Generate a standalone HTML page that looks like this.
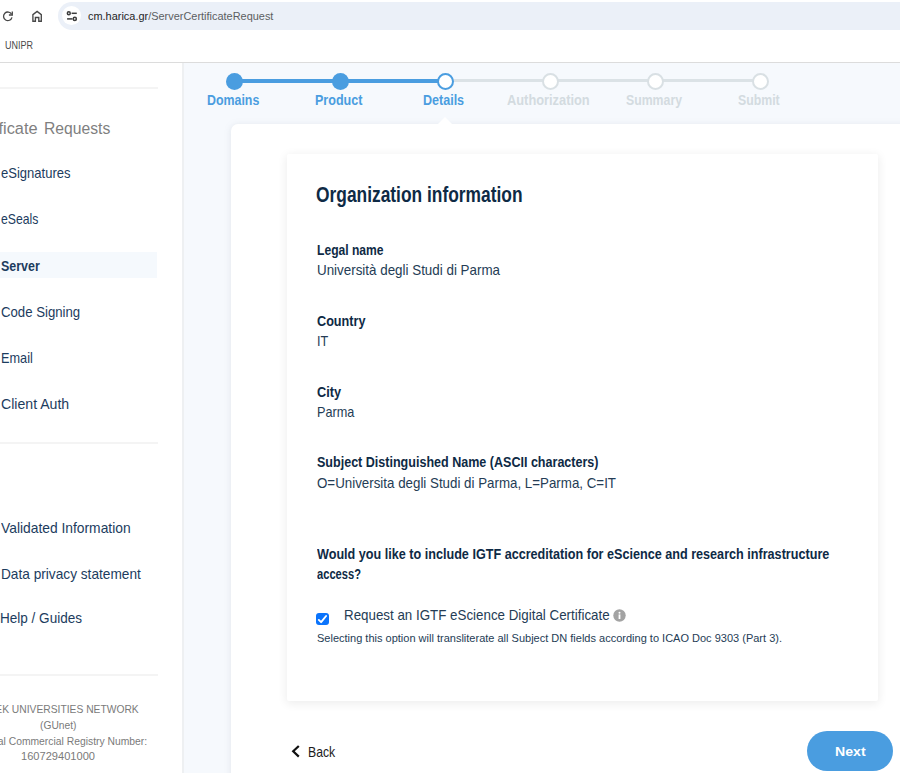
<!DOCTYPE html>
<html><head><meta charset="utf-8">
<style>
html,body{margin:0;padding:0;width:900px;height:773px;overflow:hidden;background:#fff;}
body{position:relative;font-family:"Liberation Sans",sans-serif;}
.t{position:absolute;white-space:nowrap;transform-origin:0 0;font-family:"Liberation Sans",sans-serif;}
.abs{position:absolute;}
#addr{left:58px;top:2px;width:880px;height:28px;border-radius:14px;background:#ebf0f8;}
#infoc{left:62.4px;top:6.4px;width:19px;height:19px;border-radius:50%;background:#fff;}
#topline{left:0;top:62px;width:900px;height:1px;background:#dcdcdc;}
#side{left:0;top:63px;width:182px;height:710px;background:#fff;}
#sideborder{left:182px;top:63px;width:2px;height:710px;background:#eef0f2;}
#main{left:184px;top:63px;width:716px;height:710px;background:#f6f9fd;}
.hr{position:absolute;left:0;width:157.5px;height:2px;background:#f4f4f4;}
#hl{left:0;top:252px;width:157px;height:26px;background:#f5f9fd;}
.circ{position:absolute;width:17px;height:17px;border-radius:50%;box-sizing:border-box;}
#outer{left:231px;top:124px;width:700px;height:700px;border-radius:7px;background:#fff;box-shadow:0 1px 6px 1px rgba(120,135,150,0.13);}
#tri{left:437px;top:116px;width:16px;height:9px;}
#inner{left:287px;top:154px;width:591px;height:547px;border-radius:2px;background:#fff;box-shadow:0 2px 10px 1px rgba(0,0,0,0.07);}
#cb{left:316.3px;top:612.5px;width:12.8px;height:12.6px;border-radius:3px;background:#0b74fc;}
#next{left:807px;top:731px;width:86px;height:40px;border-radius:20px;background:#4a9de0;}
</style></head><body>
<div class="abs" id="addr"></div>
<div class="abs" id="infoc"></div>
<!-- reload icon -->
<svg class="abs" style="left:2px;top:10px" width="12" height="12" viewBox="0 0 12 12"><path d="M9.6 4.2 A4.3 4.3 0 1 0 10 7.4" fill="none" stroke="#474747" stroke-width="1.3"/><path d="M10.3 1.6 V5 H6.9" fill="none" stroke="#474747" stroke-width="1.3"/></svg>
<!-- home icon -->
<svg class="abs" style="left:0;top:0" width="50" height="30" viewBox="0 0 50 30"><path d="M32.9 21.2 V14.6 L37.1 11.4 L41.3 14.6 V21.2 H38.8 V17.5 H35.4 V21.2 Z" fill="none" stroke="#474747" stroke-width="1.35" stroke-linejoin="miter"/></svg>
<!-- site info icon -->
<svg class="abs" style="left:0;top:0" width="100" height="32" viewBox="0 0 100 32"><circle cx="68.8" cy="13.3" r="1.45" fill="none" stroke="#3c3c3c" stroke-width="1.5"/><path d="M71.6 13.3 H76.8" stroke="#3c3c3c" stroke-width="1.5"/><path d="M67.1 18.9 H72.5" stroke="#3c3c3c" stroke-width="1.5"/><circle cx="74.8" cy="18.9" r="1.55" fill="none" stroke="#3c3c3c" stroke-width="1.5"/></svg>
<div class="abs" id="topline"></div>
<div class="abs" id="side"></div>
<div class="abs" id="sideborder"></div>
<div class="abs" id="main"></div>
<div class="hr" style="top:87px"></div>
<div class="abs" id="hl"></div>
<div class="hr" style="top:442px"></div>
<div class="hr" style="top:674px"></div>
<!-- stepper -->
<div class="abs" style="left:234px;top:79px;width:212px;height:4px;background:#4a9de0"></div>
<div class="abs" style="left:446px;top:79px;width:314px;height:3px;background:#dbe2e6"></div>
<div class="circ" style="left:226px;top:72.7px;background:#4a9de0"></div>
<div class="circ" style="left:331.5px;top:72.7px;background:#4a9de0"></div>
<div class="circ" style="left:437px;top:72.7px;background:#fff;border:2px solid #4a9de0"></div>
<div class="circ" style="left:542px;top:72.7px;background:#fff;border:2px solid #d9e0e4"></div>
<div class="circ" style="left:647px;top:72.7px;background:#fff;border:2px solid #d9e0e4"></div>
<div class="circ" style="left:751.8px;top:72.7px;background:#fff;border:2px solid #d9e0e4"></div>
<!-- cards -->
<div class="abs" id="outer"></div>
<svg class="abs" id="tri" viewBox="0 0 16 9"><path d="M0 9 L8 1 L16 9 Z" fill="#fff"/></svg>
<div class="abs" id="inner"></div>
<div class="abs" id="cb"></div>
<svg class="abs" style="left:316.3px;top:612.5px" width="13" height="13" viewBox="0 0 13 13"><path d="M2.8 6.9 L5.1 9.2 L10.1 3.0" fill="none" stroke="#fff" stroke-width="1.9" stroke-linecap="round" stroke-linejoin="round"/></svg>
<svg class="abs" style="left:613px;top:609px" width="13" height="13" viewBox="0 0 13 13"><circle cx="6.5" cy="6.5" r="6.2" fill="#a3a3a3"/><rect x="5.6" y="5.4" width="1.8" height="4.6" fill="#fff"/><circle cx="6.5" cy="3.7" r="1" fill="#fff"/></svg>
<svg class="abs" style="left:290px;top:744px" width="12" height="15" viewBox="0 0 12 15"><path d="M8.8 2 L3.2 7.3 L8.8 12.6" fill="none" stroke="#111" stroke-width="2.2"/></svg>
<div class="abs" id="next"></div>
<div class="t" style="left:88.40px;top:11.03px;font-size:11.3px;line-height:11.3px;font-weight:400;color:#1f1f1f;transform:scaleX(0.9681);">cm.harica.gr<span style="color:#5b5e62">/ServerCertificateRequest</span></div>
<div class="t" style="left:5.00px;top:40.19px;font-size:11px;line-height:11px;font-weight:400;color:#4a4a4a;transform:scaleX(0.8179);">UNIPR</div>
<div class="t" style="left:-36.10px;top:119.67px;font-size:17.4px;line-height:17.4px;font-weight:400;color:#7f7f7f;transform:scaleX(0.9400);">Certificate</div>
<div class="t" style="left:43.73px;top:119.67px;font-size:17.4px;line-height:17.4px;font-weight:400;color:#7f7f7f;transform:scaleX(0.9020);">Requests</div>
<div class="t" style="left:0.80px;top:166.22px;font-size:14.5px;line-height:14.5px;font-weight:400;color:#1c3c5e;transform:scaleX(0.8993);">eSignatures</div>
<div class="t" style="left:0.80px;top:212.22px;font-size:14.5px;line-height:14.5px;font-weight:400;color:#1c3c5e;transform:scaleX(0.8434);">eSeals</div>
<div class="t" style="left:0.80px;top:258.72px;font-size:14.5px;line-height:14.5px;font-weight:700;color:#1c3c5e;transform:scaleX(0.8592);">Server</div>
<div class="t" style="left:0.80px;top:304.72px;font-size:14.5px;line-height:14.5px;font-weight:400;color:#1c3c5e;transform:scaleX(0.9095);">Code Signing</div>
<div class="t" style="left:0.80px;top:350.72px;font-size:14.5px;line-height:14.5px;font-weight:400;color:#1c3c5e;transform:scaleX(0.8769);">Email</div>
<div class="t" style="left:0.80px;top:396.72px;font-size:14.5px;line-height:14.5px;font-weight:400;color:#1c3c5e;transform:scaleX(0.9723);">Client Auth</div>
<div class="t" style="left:0.80px;top:521.32px;font-size:14.5px;line-height:14.5px;font-weight:400;color:#1c3c5e;transform:scaleX(0.9533);">Validated Information</div>
<div class="t" style="left:0.80px;top:567.32px;font-size:14.5px;line-height:14.5px;font-weight:400;color:#1c3c5e;transform:scaleX(0.9427);">Data privacy statement</div>
<div class="t" style="left:0.00px;top:611.32px;font-size:14.5px;line-height:14.5px;font-weight:400;color:#1c3c5e;transform:scaleX(0.9333);">Help / Guides</div>
<div class="t" style="left:-27.12px;top:703.18px;font-size:11.6px;line-height:11.6px;font-weight:400;color:#7a7a7a;transform:scaleX(0.8870);">GREEK UNIVERSITIES NETWORK</div>
<div class="t" style="left:39.55px;top:719.18px;font-size:11.6px;line-height:11.6px;font-weight:400;color:#7a7a7a;transform:scaleX(0.8852);">(GUnet)</div>
<div class="t" style="left:-31.16px;top:734.88px;font-size:11.6px;line-height:11.6px;font-weight:400;color:#7a7a7a;transform:scaleX(0.8920);">General Commercial Registry Number:</div>
<div class="t" style="left:21.00px;top:749.78px;font-size:11.6px;line-height:11.6px;font-weight:400;color:#7a7a7a;transform:scaleX(0.9564);">160729401000</div>
<div class="t" style="left:207.25px;top:92.99px;font-size:14.3px;line-height:14.3px;font-weight:700;color:#4a9de0;transform:scaleX(0.8660);">Domains</div>
<div class="t" style="left:315.00px;top:92.99px;font-size:14.3px;line-height:14.3px;font-weight:700;color:#4a9de0;transform:scaleX(0.8775);">Product</div>
<div class="t" style="left:423.45px;top:92.99px;font-size:14.3px;line-height:14.3px;font-weight:700;color:#4a9de0;transform:scaleX(0.8765);">Details</div>
<div class="t" style="left:507.35px;top:92.99px;font-size:14.3px;line-height:14.3px;font-weight:700;color:#d3dbe0;transform:scaleX(0.8977);">Authorization</div>
<div class="t" style="left:625.70px;top:92.99px;font-size:14.3px;line-height:14.3px;font-weight:700;color:#d3dbe0;transform:scaleX(0.8593);">Summary</div>
<div class="t" style="left:737.65px;top:92.99px;font-size:14.3px;line-height:14.3px;font-weight:700;color:#d3dbe0;transform:scaleX(0.8606);">Submit</div>
<div class="t" style="left:315.50px;top:185.10px;font-size:21.5px;line-height:21.5px;font-weight:700;color:#0e2a45;transform:scaleX(0.8079);">Organization information</div>
<div class="t" style="left:317.00px;top:243.24px;font-size:14.6px;line-height:14.6px;font-weight:700;color:#0e2a45;transform:scaleX(0.8294);">Legal name</div>
<div class="t" style="left:317.00px;top:263.38px;font-size:14.2px;line-height:14.2px;font-weight:400;color:#243c55;transform:scaleX(0.9434);">Università degli Studi di Parma</div>
<div class="t" style="left:317.10px;top:313.64px;font-size:14.6px;line-height:14.6px;font-weight:700;color:#0e2a45;transform:scaleX(0.8668);">Country</div>
<div class="t" style="left:317.10px;top:333.68px;font-size:14.2px;line-height:14.2px;font-weight:400;color:#243c55;transform:scaleX(0.8882);">IT</div>
<div class="t" style="left:317.10px;top:385.34px;font-size:14.6px;line-height:14.6px;font-weight:700;color:#0e2a45;transform:scaleX(0.8703);">City</div>
<div class="t" style="left:317.10px;top:404.78px;font-size:14.2px;line-height:14.2px;font-weight:400;color:#243c55;transform:scaleX(0.8948);">Parma</div>
<div class="t" style="left:316.80px;top:454.84px;font-size:14.6px;line-height:14.6px;font-weight:700;color:#0e2a45;transform:scaleX(0.8592);">Subject Distinguished Name (ASCII characters)</div>
<div class="t" style="left:317.00px;top:475.98px;font-size:14.2px;line-height:14.2px;font-weight:400;color:#243c55;transform:scaleX(0.9397);">O=Universita degli Studi di Parma, L=Parma, C=IT</div>
<div class="t" style="left:317.10px;top:546.64px;font-size:14.6px;line-height:14.6px;font-weight:700;color:#0e2a45;transform:scaleX(0.8646);">Would you like to include IGTF accreditation for eScience and research infrastructure</div>
<div class="t" style="left:317.10px;top:567.04px;font-size:14.6px;line-height:14.6px;font-weight:700;color:#0e2a45;transform:scaleX(0.7636);">access?</div>
<div class="t" style="left:343.70px;top:607.51px;font-size:14.4px;line-height:14.4px;font-weight:400;color:#243c55;transform:scaleX(0.9276);">Request an IGTF eScience Digital Certificate</div>
<div class="t" style="left:317.00px;top:633.46px;font-size:11.5px;line-height:11.5px;font-weight:400;color:#243c55;transform:scaleX(0.9572);">Selecting this option will transliterate all Subject DN fields according to ICAO Doc 9303 (Part 3).</div>
<div class="t" style="left:308.00px;top:744.86px;font-size:14.1px;line-height:14.1px;font-weight:400;color:#1c1c1c;transform:scaleX(0.8678);">Back</div>
<div class="t" style="left:835.00px;top:744.54px;font-size:13.3px;line-height:13.3px;font-weight:700;color:#ffffff;transform:scaleX(1.0615);">Next</div>
</body></html>
